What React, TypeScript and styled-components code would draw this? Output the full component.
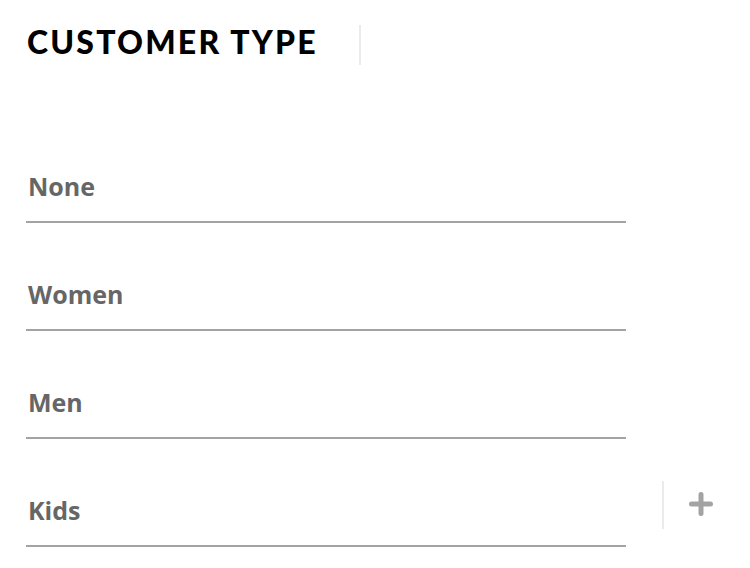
import React from 'react';
import styled, { createGlobalStyle } from 'styled-components';

const GlobalStyle = createGlobalStyle`
  html, body {
    margin: 0;
    padding: 0;
    background: #fff;
  }
  body {
    font-family: "Open Sans", "Liberation Sans", sans-serif;
  }
`;

const Page = styled.div`
  width: 750px;
  height: 568px;
  box-sizing: border-box;
  padding: 24px 0 0 26px;
  overflow: hidden;
`;

const Header = styled.div`
  display: flex;
  align-items: center;
  height: 42px;
`;

const Title = styled.h1`
  margin: 0 0 7px;
  padding-left: 1px;
  font-family: Lato, "Open Sans", sans-serif;
  font-weight: 900;
  font-size: 32px;
  letter-spacing: 2.2px;
  color: #000;
  width: 332px;
  white-space: nowrap;
`;

const Divider = styled.div<{ $height: number }>`
  width: 2px;
  height: ${p => p.$height}px;
  background: #ebebeb;
  flex-shrink: 0;
`;

const List = styled.div`
  margin-top: 49px;
  display: flex;
  flex-direction: column;
`;

const Row = styled.div`
  display: flex;
  align-items: flex-end;
`;

const Field = styled.div`
  width: 600px;
  height: 106px;
  border-bottom: 2px solid #a3a3a3;
  display: flex;
  align-items: flex-end;
`;

const Label = styled.span`
  padding: 0 0 20px 2px;
  font-family: "Open Sans", sans-serif;
  font-weight: 700;
  font-size: 25px;
  color: #666;
  line-height: 30px;
`;

const Side = styled.div`
  display: flex;
  align-items: center;
  gap: 24px;
  margin-left: 36px;
  margin-bottom: 18px;
`;

const PlusButton = styled.button`
  border: none;
  background: none;
  padding: 0;
  width: 26px;
  height: 26px;
  margin-top: -2px;
  display: flex;
  align-items: center;
  justify-content: center;
  cursor: pointer;
`;

const options = ['None', 'Women', 'Men', 'Kids'];

const App: React.FC = () => {
  return (
    <Page>
      <GlobalStyle />
      <Header>
        <Title>CUSTOMER TYPE</Title>
        <Divider $height={40} />
      </Header>
      <List>
        {options.map((opt, i) => (
          <Row key={opt}>
            <Field>
              <Label>{opt}</Label>
            </Field>
            {i === options.length - 1 && (
              <Side>
                <Divider $height={48} />
                <PlusButton aria-label="Add">
                  <svg width="26" height="26" viewBox="0 0 26 26">
                    <path
                      d="M13 3.5v19M3.5 13h19"
                      stroke="#a3a3a3"
                      strokeWidth="5"
                      strokeLinecap="round"
                    />
                  </svg>
                </PlusButton>
              </Side>
            )}
          </Row>
        ))}
      </List>
    </Page>
  );
};

export default App;
